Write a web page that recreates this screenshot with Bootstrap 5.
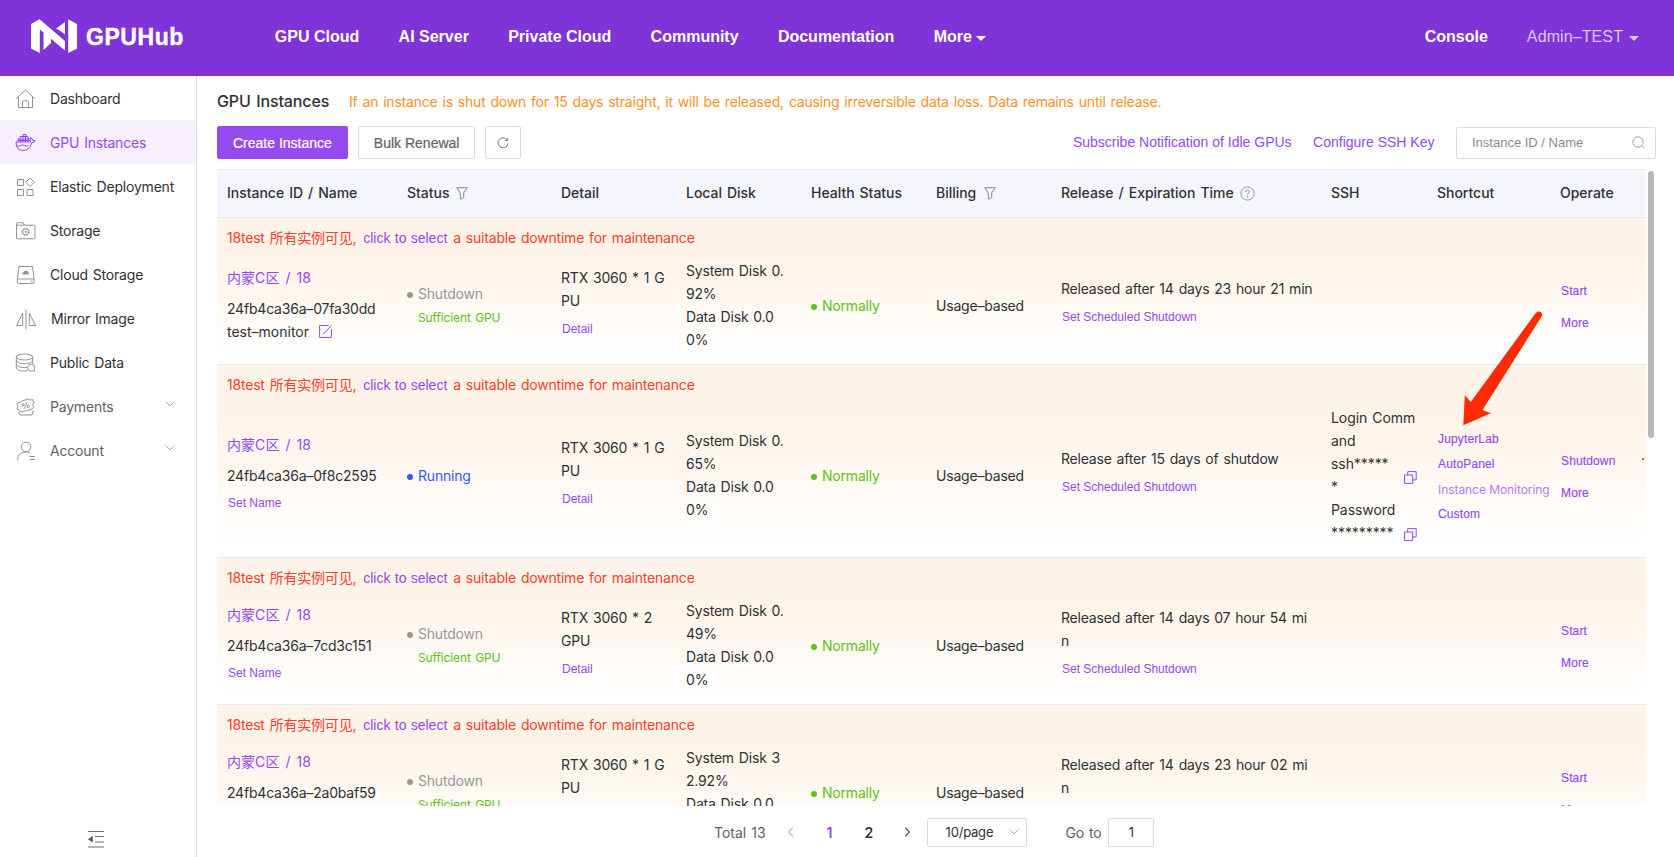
<!DOCTYPE html>
<html lang="en">
<head>
<meta charset="utf-8">
<title>GPUHub Console</title>
<link href="https://cdn.jsdelivr.net/npm/bootstrap@5.3.0/dist/css/bootstrap.min.css" rel="stylesheet">
<style>
:root{--brand:#9449ef;--bar:#8033d8;--line:#d9dae6;--helv:"Liberation Sans",Arial,sans-serif}
body{font-family:Inter,"Noto Sans CJK SC",sans-serif;font-size:14px;line-height:23px;letter-spacing:-.2px;word-spacing:1.2px;color:#303133;height:857px;overflow:hidden}
svg{display:block;flex:none}
a{color:var(--brand);text-decoration:none}
.topbar{height:76px;background:var(--bar);padding:0 35px 3px 31px;font:16px/24px var(--helv);letter-spacing:0;word-spacing:0}
.topbar a{color:#fff;font-weight:700;white-space:nowrap}
.topbar .brand-name{font-size:23px;letter-spacing:.55px;-webkit-text-stroke:.4px #fff;margin-left:9px}
.topbar a.user{font-weight:400;color:#dcc5f6;letter-spacing:.1px}
.caret{width:0;height:0;border:5px solid transparent;border-top-color:currentColor;border-bottom:0}
.side{width:197px;border-right:1px solid var(--line)}
.side a{height:44px;padding-left:15px;gap:14px;color:#303133}
.side a.active{background:#f6f0fe;color:var(--brand)}
.side a.group{color:#606266}
.side svg{stroke:#909399;fill:none}
.side a>svg:first-child{margin-top:2px}
.side a.active svg{stroke:var(--brand)}
.side .collapse-mark{margin:0 0 8px 87px}
.content-area{padding:0 18px 0 20px}
.heading{font-size:16px;font-weight:500;letter-spacing:-.1px}
.tip{color:#fc8f1e}
.tool{font:14px/20px var(--helv);letter-spacing:0;word-spacing:0;white-space:nowrap;border-radius:2px;border:1px solid var(--line);height:33px;padding:0 15px;color:#606266;background:#fff;-webkit-text-stroke:.2px}
.tool.primary{background:#964bf0;border-color:#964bf0;color:#fff}
.helv{font-family:var(--helv);letter-spacing:0;word-spacing:0}
.notice .helv{margin:0 1px 0 2px;word-spacing:.4px}
.search{width:200px;height:32px;border:1px solid var(--line);border-radius:2px;padding:0 10px 0 15px;color:#8a8c90;font:13px/20px var(--helv)}
.viewport{width:1429px;height:637px;overflow:hidden;border-top:1px solid #e6e8f2}
.cols{display:grid;grid-template-columns:180px 154px 125px 125px 125px 125px 270px 106px 123px 81px 80px;width:1494px}
.cols>div{padding:0 10px;white-space:nowrap}
.heads{height:48px;background:#f5f6fb;border-bottom:1px solid #e6e8f2;align-items:center;font-weight:500;letter-spacing:-.02px;padding-bottom:2px;word-spacing:1.3px}
.heads svg{margin-top:1px}
.inst{border-bottom:1px solid #e6e8f2;background:linear-gradient(#fef3e8 0%,#fef3e8 27%,#fffdfb 82%,#fff 95%)}
.notice{height:41px;padding:8px 10px 0;color:#fb3e2a}
.inst .cols{align-items:center;padding-bottom:13px}
.sm-link{display:block;font:12px/35px var(--helv);letter-spacing:0;word-spacing:0;padding-left:1px;margin-bottom:-2px}
.sm-link.name-link{line-height:33px;margin:0}
.acts .sm-link{line-height:32px;margin:0;letter-spacing:.14px;-webkit-text-stroke:.15px}
.cols>.acts{padding-top:3px}
.acts.tight .sm-link{line-height:25px}
.zone{display:block;line-height:30px;margin-bottom:3.5px;letter-spacing:.05px;word-spacing:2px}
.dotted::before{content:"";display:inline-block;width:6px;height:6px;border-radius:50%;background:currentColor;margin-right:5px;vertical-align:1px}
.off{color:#969799}.ok{color:#5ac414}.run{color:#2f5cf5}
.suff{font-size:12px;line-height:25px;margin-bottom:-2px;padding-left:11px;letter-spacing:-.12px}
.thumb{width:6px;height:267px;border-radius:3px;background:#b9b9b9;margin:2px 0 0 2px}
.pager{height:51px;padding:1px 0 0 497px;color:#606266}
.pager b{font-weight:600;color:#303133}
.pbox{height:29px;border:1px solid var(--line);border-radius:2px;font-size:13px;color:#303133}
.pointer{position:absolute;left:1460px;top:308px}
</style>
</head>
<body>
<svg width="0" height="0" class="position-absolute">
  <defs>
    <symbol id="funnel" viewBox="0 0 12 13"><path d="M.7.7h10.6L7.7 6v4.6l-3.4 1.6V6z" fill="none" stroke="#85878c"/></symbol>
    <symbol id="copy" viewBox="0 0 13 13"><path d="M.5 4h8.2v8.4H.5zM3.7 4V.6h8.5v8.3H8.7" fill="none" stroke="#9449ef"/></symbol>
    <symbol id="down" viewBox="0 0 10 6"><path d="M.8.8 5 4.9 9.200.8" fill="none" stroke="#a4a7ad"/></symbol>
  </defs>
</svg>
<header class="topbar d-flex align-items-center">
  <svg width="46" height="35" viewBox="0 0 46 35" fill="#fff"><path d="M0 5 8.500.3 34 22v9.500L8.800 10.500V34L0 29.500zM12.500 13l7.500 6.500v4.500l-7.500 7zM34 3v12.500l-4.200-3.300-4.800-2.700zM37.200.3 46 5v24.500L37.200 34z"/></svg>
  <a href="#" class="brand-name">GPUHub</a>
  <nav class="d-flex" style="gap:39.300px;margin-left:91px">
    <a href="#">GPU Cloud</a><a href="#">AI Server</a><a href="#">Private Cloud</a><a href="#">Community</a><a href="#">Documentation</a><a href="#" class="d-flex align-items-center gap-1">More<span class="caret mt-1"></span></a>
  </nav>
  <a href="#" class="ms-auto">Console</a>
  <a href="#" class="user d-flex align-items-center" style="margin-left:39px;gap:6px">Admin–TEST<span class="caret mt-1"></span></a>
</header>
<div class="d-flex" style="height:781px">
  <aside class="side d-flex flex-column flex-shrink-0">
    <a href="#" class="d-flex align-items-center"><svg width="21" height="20" viewBox="0 0 21 20"><path d="M1 9.800 10.400 1l9.500 8.800M3.500 8v10.500h14V8M7.500 18.500V13q0-1.200 1.200-1.200h3.500q1.200 0 1.200 1.200v5.500"/></svg>Dashboard</a>
    <a href="#" class="active d-flex align-items-center"><svg width="21" height="20" viewBox="0 0 21 20"><path d="M1 9h14.200q1-1.500.4-4.500 2 .8 2.200 3 1.300-.5 2.400.2-.9 2-3.400 2Q14.500 17.500 8 17.500 1 17.500 1 9zM3 8.500V6h12M5 6V3.500h8V6M8 3.500V1.500h3v2M5.500 6v3M8 3.500v5.500M10.500 3.500v5.500M13 6v3M3 7.500h12M1.500 12.500q2 1.200 4 0t4 0 4 0"/></svg>GPU Instances</a>
    <a href="#" class="d-flex align-items-center"><svg width="21" height="20" viewBox="0 0 21 20"><path d="M2.500 2.500h6v6h-6zM2.500 12.500h6v6h-6zM12 12.500h6v6h-6zM15 1l4.200 4.300L15 9.500l-4.200-4.200z"/></svg>Elastic Deployment</a>
    <a href="#" class="d-flex align-items-center"><svg width="21" height="20" viewBox="0 0 21 20"><path d="M1.500 17V2.500q0-.8.8-.8h6l1.200 2.500h9.700q.8 0 .8.800v12q0 .8-.8.800H2.300q-.8 0-.8-.8zM2 4.200h7"/><circle cx="10.700" cy="10.800" r="3"/><circle cx="10.700" cy="10.800" r="3.700" stroke-dasharray="1.450 1.450"/><circle cx="10.700" cy="10.800" r=".8"/></svg>Storage</a>
    <a href="#" class="d-flex align-items-center"><svg width="21" height="20" viewBox="0 0 21 20"><path d="M4 1.500h13.500l1.500 12v4q0 1-1 1H3.300q-1 0-1-1v-4zM2.300 14h16.700M15.500 16.300h2"/><path d="M7.700 9.500q-1.200-1.800.7-2.300Q9.500 5 11.700 5.700q1.500.3 1.500 1.700 1.400.6.600 2.100z" fill="#909399" stroke="none"/></svg>Cloud Storage</a>
    <a href="#" class="d-flex align-items-center"><svg width="22" height="20" viewBox="0 0 22 20"><path d="M11 .5v19.500M7.700 4v12.500H1.500zM14.300 4v12.500h6.200z"/></svg>Mirror Image</a>
    <a href="#" class="d-flex align-items-center"><svg width="21" height="20" viewBox="0 0 21 20"><ellipse cx="9.500" cy="4" rx="8.200" ry="3"/><path d="M1.300 4v11q1.500 3 8.200 3 1.700 0 2.900-.2M17.700 4v7.200M1.300 7.700q1.500 3 8.200 3t8.200-3M1.300 11.500q1.500 3 8.200 3l2.500-.2"/><circle cx="16.200" cy="14.800" r="3.600"/><path d="m18.700 17.500 1.500 1.500"/></svg>Public Data</a>
    <a href="#" class="group d-flex align-items-center"><svg width="21" height="20" viewBox="0 0 21 20"><path d="M2 6.500 13 1.700l2 1.300 3-.3.800 3-1.300 2 1.300 2-2 2.500L6 15l-1.800-1.800L2 12l1-2.500zM3 15.500h1.200l1 2.500h11.500l1.800-3.500h-1.200M6.500 9.500l1.700-1M9 12l3-6.500"/><circle cx="8.200" cy="7.600" r="1"/><circle cx="13.200" cy="9.400" r="1.200"/></svg>Payments<svg width="10" height="6" class="ms-auto mb-1" style="margin-right:21px"><use href="#down"/></svg></a>
    <a href="#" class="group d-flex align-items-center"><svg width="21" height="20" viewBox="0 0 21 20"><circle cx="11" cy="6" r="4.800"/><path d="M2.500 19q.2-8 8.500-8.200 2.600 0 4.500 1.300M14.500 15.500h5.500M14.500 18.500h5.500"/></svg>Account<svg width="10" height="6" class="ms-auto mb-1" style="margin-right:21px"><use href="#down"/></svg></a>
    <svg class="collapse-mark mt-auto" width="18" height="19" viewBox="0 0 18 19"><path d="M1 1.500h16M8 6.500h9M8 12h9M1 17h16" stroke="#6a6c70"/><path d="m.8 9.200 5-3.200v6.400z" fill="#5a5c60" stroke="none"/></svg>
  </aside>
  <main class="content-area flex-grow-1">
    <div class="d-flex align-items-center" style="height:50px"><span class="heading" style="width:132px">GPU Instances</span><span class="tip">If an instance is shut down for 15 days straight, it will be released, causing irreversible data loss. Data remains until release.</span></div>
    <div class="d-flex align-items-center" style="height:33px;gap:10px">
      <button class="tool primary">Create Instance</button>
      <button class="tool" style="width:117px">Bulk Renewal</button>
      <button class="tool d-flex align-items-center justify-content-center p-0" style="width:36px"><svg width="12" height="12" viewBox="0 0 12 12" fill="none" stroke="#77797d"><path d="M10.200 3A5 5 0 1 0 11 6.500M10.700.8v2.700H8"/></svg></button>
      <div class="d-flex align-items-center ms-auto helv" style="gap:21.500px"><a href="#">Subscribe Notification of Idle GPUs</a><a href="#">Configure SSH Key</a>
        <div class="search d-flex align-items-center justify-content-between">Instance ID / Name<svg width="13" height="13" viewBox="0 0 13 13" fill="none" stroke="#a4a7ad"><circle cx="6" cy="6" r="5.200"/><path d="m9.800 9.800 2.400 2.400"/></svg></div></div>
    </div>
    <div class="d-flex" style="margin-top:10px">
      <div class="viewport">
        <div class="cols heads">
          <div>Instance ID / Name</div>
          <div class="d-flex align-items-center" style="gap:7px">Status<svg width="12" height="13"><use href="#funnel"/></svg></div>
          <div>Detail</div><div>Local Disk</div><div>Health Status</div>
          <div class="d-flex align-items-center gap-2">Billing<svg width="12" height="13"><use href="#funnel"/></svg></div>
          <div class="d-flex align-items-center" style="gap:6px">Release / Expiration Time<svg width="15" height="15" viewBox="0 0 15 15" fill="none" stroke="#96989c"><circle cx="7.500" cy="7.500" r="6.600"/><path d="M5.500 6q0-2 2-2t2 1.800q0 .9-1 1.500t-1 1.500M7.500 10v1.200"/></svg></div>
          <div>SSH</div><div>Shortcut</div><div>Operate</div><div></div>
        </div>

        <section class="inst">
          <div class="notice">18test 所有实例可见, <a href="#" class="helv">click to select</a> a suitable downtime for maintenance</div>
          <div class="cols">
            <div style="padding-bottom:4.500px"><a href="#" class="zone">内蒙C区 / 18</a>24fb4ca36a–07fa30dd<div class="d-flex align-items-center" style="gap:10px"><span style="letter-spacing:0">test–monitor</span><svg width="13" height="13" viewBox="0 0 13 13" fill="none" stroke="#9449ef"><path d="M9.500.6H.6v11.800h11.800V4M4 9.500l8.400-8.900"/></svg></div></div>
            <div><div class="dotted off">Shutdown</div><div class="suff ok">Sufficient GPU</div></div>
            <div>RTX 3060 * 1 G<br>PU<a href="#" class="sm-link">Detail</a></div>
            <div>System Disk 0.<br>92%<br>Data Disk 0.0<br>0%</div>
            <div class="dotted ok">Normally</div>
            <div>Usage–based</div>
            <div>Released after 14 days 23 hour 21 min<a href="#" class="sm-link">Set Scheduled Shutdown</a></div>
            <div></div><div></div>
            <div class="acts"><a href="#" class="sm-link">Start</a><a href="#" class="sm-link">More</a></div>
            <div></div>
          </div>
        </section>

        <section class="inst">
          <div class="notice">18test 所有实例可见, <a href="#" class="helv">click to select</a> a suitable downtime for maintenance</div>
          <div class="cols">
            <div><a href="#" class="zone">内蒙C区 / 18</a>24fb4ca36a–0f8c2595<a href="#" class="sm-link name-link">Set Name</a></div>
            <div class="dotted run">Running</div>
            <div>RTX 3060 * 1 G<br>PU<a href="#" class="sm-link">Detail</a></div>
            <div>System Disk 0.<br>65%<br>Data Disk 0.0<br>0%</div>
            <div class="dotted ok">Normally</div>
            <div>Usage–based</div>
            <div>Release after 15 days of shutdow<a href="#" class="sm-link">Set Scheduled Shutdown</a></div>
            <div style="letter-spacing:-.07px">Login Comm<br>and<div class="d-flex align-items-center"><span style="width:74px">ssh*****<br>*</span><svg width="13" height="13" class="mt-1"><use href="#copy"/></svg></div>Password<div class="d-flex align-items-center"><span style="width:74px">*********</span><svg width="13" height="13" class="mt-1"><use href="#copy"/></svg></div></div>
            <div class="acts tight pe-0"><a href="#" class="sm-link">JupyterLab</a><a href="#" class="sm-link">AutoPanel</a><a href="#" class="sm-link" style="font-family:Inter;letter-spacing:-.06px;-webkit-text-stroke:0;color:#b27cf3">Instance Monitoring</a><a href="#" class="sm-link">Custom</a></div>
            <div class="acts"><a href="#" class="sm-link">Shutdown</a><a href="#" class="sm-link">More</a></div>
            <div style="padding-bottom:34px">···</div>
          </div>
        </section>

        <section class="inst">
          <div class="notice">18test 所有实例可见, <a href="#" class="helv">click to select</a> a suitable downtime for maintenance</div>
          <div class="cols">
            <div><a href="#" class="zone">内蒙C区 / 18</a>24fb4ca36a–7cd3c151<a href="#" class="sm-link name-link">Set Name</a></div>
            <div><div class="dotted off">Shutdown</div><div class="suff ok">Sufficient GPU</div></div>
            <div>RTX 3060 * 2<br>GPU<a href="#" class="sm-link">Detail</a></div>
            <div>System Disk 0.<br>49%<br>Data Disk 0.0<br>0%</div>
            <div class="dotted ok">Normally</div>
            <div>Usage–based</div>
            <div>Released after 14 days 07 hour 54 mi<br>n<a href="#" class="sm-link">Set Scheduled Shutdown</a></div>
            <div></div><div></div>
            <div class="acts"><a href="#" class="sm-link">Start</a><a href="#" class="sm-link">More</a></div>
            <div></div>
          </div>
        </section>

        <section class="inst">
          <div class="notice">18test 所有实例可见, <a href="#" class="helv">click to select</a> a suitable downtime for maintenance</div>
          <div class="cols">
            <div><a href="#" class="zone">内蒙C区 / 18</a>24fb4ca36a–2a0baf59<a href="#" class="sm-link name-link">Set Name</a></div>
            <div><div class="dotted off">Shutdown</div><div class="suff ok">Sufficient GPU</div></div>
            <div>RTX 3060 * 1 G<br>PU<a href="#" class="sm-link">Detail</a></div>
            <div>System Disk 3<br>2.92%<br>Data Disk 0.0<br>0%</div>
            <div class="dotted ok">Normally</div>
            <div>Usage–based</div>
            <div>Released after 14 days 23 hour 02 mi<br>n<a href="#" class="sm-link">Set Scheduled Shutdown</a></div>
            <div></div><div></div>
            <div class="acts"><a href="#" class="sm-link">Start</a><a href="#" class="sm-link">More</a></div>
            <div></div>
          </div>
        </section>
      </div>
      <div class="thumb"></div>
    </div>
    <div class="pager d-flex align-items-center">
      <span style="letter-spacing:-.02px">Total 13</span>
      <svg width="7" height="10" viewBox="0 0 7 10" fill="none" stroke="#b4b7be" stroke-width="1.200" style="margin-left:21px"><path d="M5.800.8 1.500 5l4.300 4.200"/></svg>
      <b style="margin-left:33px;width:38px;color:var(--brand)">1</b><b style="width:39px">2</b>
      <svg width="7" height="10" viewBox="0 0 7 10" fill="none" stroke="#55585e" stroke-width="1.200"><path d="m1.200.8 4.300 4.200-4.300 4.200"/></svg>
      <div class="pbox d-flex align-items-center" style="width:100px;margin-left:16px;padding:0 7px 0 18px">10/page<svg class="ms-auto" width="10" height="6"><use href="#down"/></svg></div>
      <span style="margin-left:39px">Go to</span>
      <div class="pbox d-flex align-items-center justify-content-center" style="width:46px;margin-left:7px">1</div>
    </div>
  </main>
</div>
<svg class="pointer" width="86" height="120" viewBox="0 0 86 120"><path d="m3.300 117.300 1.500-30 6 6.800L75.500 5.200q3-3 5.700-.7 2 2 .1 4.500L22.500 102l8.300 3.300z" fill="#ff2a05"/></svg>
</body>
</html>
